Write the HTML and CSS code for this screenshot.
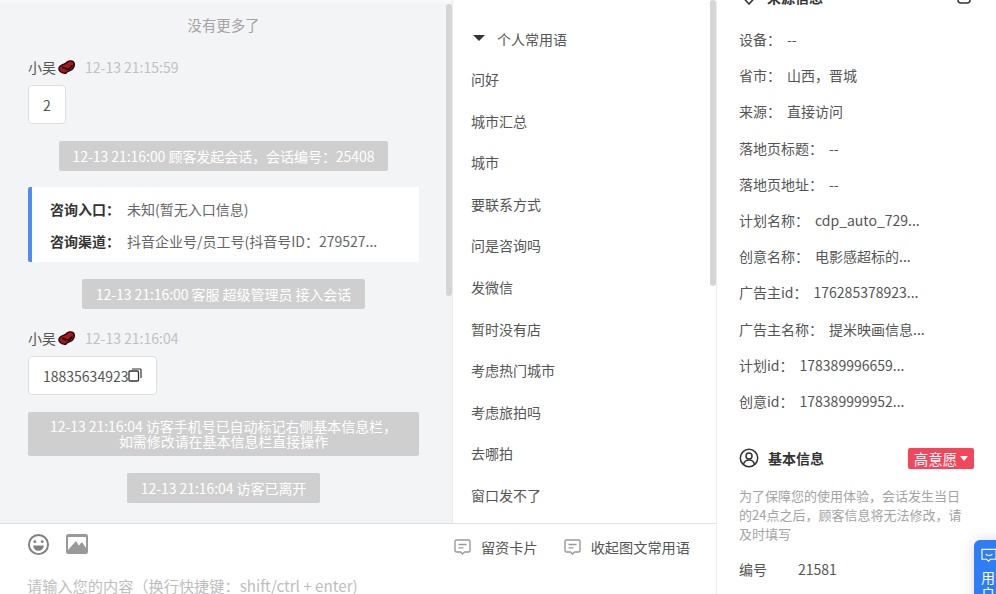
FILE: index.html
```html
<!DOCTYPE html>
<html lang="zh">
<head>
<meta charset="utf-8">
<title>会话</title>
<link rel="stylesheet" href="styles.css">
</head>
<body>
<div class="app">
  <div class="main">
    <div class="upper">
      <section class="chat">
        <div class="nomore">没有更多了</div>
        <div class="who first"><span class="name">小吴</span>
          <svg class="lips" viewBox="0 0 17 14"><path d="M1 8C1.500 5 5 4.500 7.500 3.500 9.500.8 13.500.2 15.500 2c1.500 2 .8 5.500-1.500 7.500-2.500 1.800-4.500 1.500-6.500 4C4 12.800.5 11 1 8z" fill="#b5121b" stroke="#1c0a0a" stroke-width="1.400"/><path d="M4 7.500c3-.5 4 2.500 6.500 1.500s2.500-3 4-3.500" fill="none" stroke="#1c0a0a" stroke-width="1.900"/></svg>
          <span class="time">12-13 21:15:59</span></div>
        <div class="bubble">2</div>
        <div class="sys">12-13 21:16:00 顾客发起会话，会话编号：25408</div>
        <div class="entry">
          <div class="entry-row"><b>咨询入口：</b><span>未知(暂无入口信息)</span></div>
          <div class="entry-row"><b>咨询渠道：</b><span>抖音企业号/员工号(抖音号ID：279527...</span></div>
        </div>
        <div class="sys">12-13 21:16:00 客服 超级管理员 接入会话</div>
        <div class="who"><span class="name">小吴</span>
          <svg class="lips" viewBox="0 0 17 14"><path d="M1 8C1.500 5 5 4.500 7.500 3.500 9.500.8 13.500.2 15.500 2c1.500 2 .8 5.500-1.500 7.500-2.500 1.800-4.500 1.500-6.500 4C4 12.800.5 11 1 8z" fill="#b5121b" stroke="#1c0a0a" stroke-width="1.400"/><path d="M4 7.500c3-.5 4 2.500 6.500 1.500s2.500-3 4-3.500" fill="none" stroke="#1c0a0a" stroke-width="1.900"/></svg>
          <span class="time">12-13 21:16:04</span></div>
        <div class="bubble">18835634923<svg class="copy" viewBox="0 0 14 14"><rect x="1" y="3" width="9.500" height="10" rx="1" fill="none" stroke="#333" stroke-width="1.300"/><path d="M4 1h8.200a.8.8 0 0 1 .8.8V10" fill="none" stroke="#333" stroke-width="1.200"/></svg></div>
        <div class="sys wide">12-13 21:16:04 访客手机号已自动标记右侧基本信息栏，<br>如需修改请在基本信息栏直接操作</div>
        <div class="sys">12-13 21:16:04 访客已离开</div>
        <i class="bar bar-chat"></i>
      </section>
      <section class="phrases">
        <div class="ph-head"><i class="tri"></i>个人常用语</div>
        <ul class="ph-list">
          <li>问好</li><li>城市汇总</li><li>城市</li><li>要联系方式</li><li>问是咨询吗</li><li>发微信</li><li>暂时没有店</li><li>考虑热门城市</li><li>考虑旅拍吗</li><li>去哪拍</li><li>窗口发不了</li>
        </ul>
        <i class="bar bar-ph"></i>
      </section>
    </div>
    <section class="composer">
      <div class="tools">
        <svg class="smile" viewBox="0 0 24 24"><circle cx="12" cy="12" r="10" fill="none" stroke="#808080" stroke-width="2"/><circle cx="8.200" cy="9" r="1.500" fill="#808080"/><circle cx="15.800" cy="9" r="1.500" fill="#808080"/><path d="M6.500 13h11a5.500 5.500 0 0 1-11 0z" fill="#808080"/></svg>
        <svg class="pic" viewBox="0 0 22 20"><rect width="22" height="20" rx="2.500" fill="#999"/><path d="M2 3h18v11l-4-6-3 4-3-5-8 9z" fill="#fff"/><path d="M2 17l6-7 3 4 4-5 5 7v1H2z" fill="#999"/></svg>
        <span class="tool-btn first-btn"><svg class="msg" viewBox="0 0 17 16"><path d="M2.500 1h12A1.500 1.500 0 0 1 16 2.500v9a1.500 1.500 0 0 1-1.500 1.500h-4l-2 2-2-2h-4A1.500 1.500 0 0 1 1 11.500v-9A1.500 1.500 0 0 1 2.500 1z" fill="none" stroke="#999" stroke-width="1.400"/><path d="M4.500 5.500h8M4.500 8.800h5" stroke="#999" stroke-width="1.300"/></svg>留资卡片</span>
        <span class="tool-btn"><svg class="msg" viewBox="0 0 17 16"><path d="M2.500 1h12A1.500 1.500 0 0 1 16 2.500v9a1.500 1.500 0 0 1-1.500 1.500h-4l-2 2-2-2h-4A1.500 1.500 0 0 1 1 11.500v-9A1.500 1.500 0 0 1 2.500 1z" fill="none" stroke="#999" stroke-width="1.400"/><path d="M4.500 5.500h8M4.500 8.800h5" stroke="#999" stroke-width="1.300"/></svg>收起图文常用语</span>
      </div>
      <div class="input">请输入您的内容（换行快捷键：shift/ctrl + enter)</div>
    </section>
  </div>
  <aside class="side">
    <div class="side-head">
      <svg class="ic-source" viewBox="0 0 16 16"><path d="M8 15L2 8.500C0 6 1.500 2 5 2c1.500 0 2.500 1 3 2 .5-1 1.500-2 3-2 3.500 0 5 4 3 6.500z" fill="none" stroke="#333" stroke-width="1.600"/></svg>
      <strong>来源信息</strong>
      <svg class="ic-edit" viewBox="0 0 14 14"><rect x="1" y="1" width="12" height="12" rx="3" fill="none" stroke="#333" stroke-width="1.500"/></svg>
    </div>
    <ul class="src">
      <li><span class="k">设备：</span>--</li>
      <li><span class="k">省市：</span>山西，晋城</li>
      <li><span class="k">来源：</span>直接访问</li>
      <li><span class="k">落地页标题：</span>--</li>
      <li><span class="k">落地页地址：</span>--</li>
      <li><span class="k">计划名称：</span>cdp_auto_729...</li>
      <li><span class="k">创意名称：</span>电影感超标的...</li>
      <li><span class="k">广告主id：</span>176285378923...</li>
      <li><span class="k">广告主名称：</span>提米映画信息...</li>
      <li><span class="k">计划id：</span>178389996659...</li>
      <li><span class="k">创意id：</span>178389999952...</li>
    </ul>
    <div class="basic-head">
      <svg class="ic-user" viewBox="0 0 20 20"><circle cx="10" cy="10" r="8.700" fill="none" stroke="#333" stroke-width="1.500"/><circle cx="10" cy="8" r="3" fill="none" stroke="#333" stroke-width="1.500"/><path d="M4.500 16c1-3 3-4 5.500-4s4.500 1 5.500 4" fill="none" stroke="#333" stroke-width="1.500"/></svg>
      <strong>基本信息</strong>
      <span class="tag">高意愿<i class="tag-tri"></i></span>
    </div>
    <p class="note">为了保障您的使用体验，会话发生当日的24点之后，顾客信息将无法修改，请及时填写</p>
    <div class="field"><span class="field-k">编号</span><span>21581</span></div>
    <div class="float">
      <svg class="float-ic" viewBox="0 0 17 16"><path d="M1 1.500h15v10.500h-6l-2 2-2-2H1z" fill="none" stroke="#fff" stroke-width="1.300"/><path d="M5 6.500c2 2 5 2 7 0" fill="none" stroke="#fff" stroke-width="1.300"/></svg>
      <span>用户</span>
    </div>
  </aside>
</div>
</body>
</html>
```
FILE: styles.css
```css
* { box-sizing: border-box; }
html, body { margin: 0; height: 100%; overflow: hidden; }
body {
  font-family: "Noto Sans CJK SC", "Noto Sans", sans-serif;
  font-size: 14px;
  color: #555;
  background: #fff;
}
ul { list-style: none; margin: 0; padding: 0; }
.app { display: flex; width: 996px; height: 594px; overflow: hidden; }
.main { width: 716px; flex: none; display: flex; flex-direction: column; }
.upper { display: flex; height: 523px; flex: none; }

.chat {
  position: relative;
  width: 452px;
  flex: none;
  background: linear-gradient(#fbfbfc 0, #f7f7f8 2px, #f3f4f6 4px);
  padding: 15px 33px 0 28px;
  overflow: hidden;
}
.nomore { height: 20px; line-height: 20px; text-align: center; color: #a3a3a3; font-size: 14.400px; }
.who { display: flex; align-items: center; height: 20px; line-height: 20px; margin-top: 19px; }
.who.first { margin-top: 22px; }
.name { color: #555; }
.lips { width: 17px; height: 14px; margin-left: 2px; margin-bottom: 1px; }
.time { margin-left: 10px; color: #c1c1c1; }
.bubble {
  display: flex;
  align-items: center;
  width: fit-content;
  height: 39px;
  margin-top: 8px;
  padding: 0 14px;
  background: #fff;
  border: 1px solid #dedede;
  border-radius: 4px;
  color: #555;
}
.copy { width: 14px; height: 14px; margin-bottom: 2px; }
.sys {
  display: block;
  width: fit-content;
  margin: 17px auto 0;
  padding: 0 14px;
  height: 30px;
  line-height: 30px;
  text-align: center;
  background: #cfcfcf;
  color: #fff;
  border-radius: 2px;
  white-space: nowrap;
  letter-spacing: -.05px;
}
.sys.wide { width: 391px; height: 44px; padding: 7px 0 0; line-height: 14.500px; }
.entry {
  margin-top: 16px;
  height: 75px;
  padding: 7px 0 0 18px;
  background: #fff;
  border-left: 4px solid #4e8cf7;
  border-radius: 2px;
}
.entry-row { display: flex; height: 31.500px; line-height: 31.500px; color: #666; }
.entry-row b { flex: none; width: 77px; color: #333; font-weight: 700; }
.bar { position: absolute; right: 0; width: 6px; background: #d5d5d5; border-radius: 3px; }
.bar-chat { top: 4px; height: 292px; }
.bar-ph { top: 0; height: 286px; }

.phrases { position: relative; flex: 1; padding-left: 18px; border-left: 1px solid #ececec; overflow: hidden; }
.ph-head { display: flex; align-items: center; height: 20px; line-height: 20px; margin-top: 29px; color: #555; }
.tri {
  width: 0; height: 0; margin: 0 12px 2px 2px;
  border-left: 6px solid transparent;
  border-right: 6px solid transparent;
  border-top: 6px solid #333;
}
.ph-list { margin-top: 10px; }
.ph-list li { height: 41.600px; line-height: 41.600px; color: #555; }

.composer { flex: 1; border-top: 1px solid #e0e0e0; background: #fff; padding: 0 26px 0 27px; overflow: hidden; }
.tools { display: flex; align-items: center; height: 41px; }
.smile { width: 23px; height: 23px; margin-top: -1px; }
.pic { width: 22px; height: 20px; margin-left: 16px; margin-top: -1px; }
.tool-btn { display: flex; align-items: center; margin-left: 26px; margin-top: 4px; color: #555; font-size: 14.200px; }
.first-btn { margin-left: auto; }
.msg { width: 17px; height: 16px; margin-right: 10px; }
.input { margin-top: 10px; height: 20px; line-height: 20px; color: #bdbdbd; white-space: nowrap; font-size: 15.200px; }

.side { position: relative; flex: 1; min-width: 0; border-left: 1px solid #ececec; padding: 0 22px; overflow: hidden; }
.side-head { display: flex; align-items: center; height: 20px; margin-top: -13px; }
.side-head strong, .basic-head strong { color: #333; font-weight: 700; }
.ic-source { width: 16px; height: 16px; margin-left: 2px; margin-right: 10px; }
.ic-edit { width: 14px; height: 14px; margin-left: auto; margin-right: 3px; }
.src { margin-top: 14px; }
.src li { height: 36.200px; line-height: 36.200px; color: #555; white-space: nowrap; }
.k { margin-right: 6px; }
.basic-head { display: flex; align-items: center; height: 22px; margin-top: 28px; }
.ic-user { width: 20px; height: 20px; margin-right: 9px; }
.tag {
  display: flex; align-items: center; justify-content: center;
  width: 66px; height: 21px; margin-left: auto;
  background: #f5455a; color: #fff; border-radius: 2px; font-size: 14.500px;
}
.tag-tri {
  width: 0; height: 0; margin-left: 3px;
  border-left: 4px solid transparent;
  border-right: 4px solid transparent;
  border-top: 5px solid #fff;
}
.note { margin: 17px 0 0; max-width: 228px; font-size: 13px; line-height: 19px; color: #a3a3a3; }
.field { display: flex; margin-top: 16px; height: 20px; line-height: 20px; color: #555; }
.field-k { width: 59px; }
.float {
  position: absolute;
  left: 257px; top: 540px;
  width: 40px; height: 90px;
  padding: 8px 0 0 7px;
  background: #2f7df6;
  color: #fff;
  border-radius: 6px 0 0 6px;
  box-shadow: 0 0 14px rgba(0,0,0,.15);
}
.float-ic { display: block; width: 16px; height: 15px; }
.float span { display: block; width: 14px; margin-top: 6px; line-height: 16px; }
```
